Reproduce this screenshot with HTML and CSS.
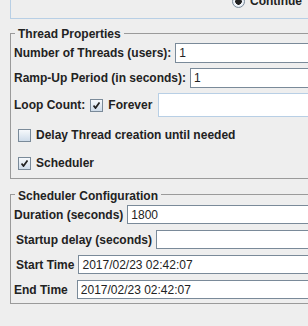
FILE: index.html
```html
<!DOCTYPE html>
<html lang="en">
<head>
    <meta charset="UTF-8">
    <title>Thread Group</title>
    <link rel="stylesheet" href="styles.css">
</head>
<body>

    <div class="policy">
        <label class="radio"><span class="radio-dot"></span>Continue</label>
    </div>

    <div class="group">
        <div class="group-title">Thread Properties</div>

        <div class="row first">
            <span class="label">Number of Threads (users):</span>
            <input class="field" type="text" value="1">
        </div>
        <div class="row">
            <span class="label">Ramp-Up Period (in seconds):</span>
            <input class="field" type="text" value="1">
        </div>
        <div class="row loop">
            <span class="label">Loop Count:</span>
            <span class="check on loop-check"></span>
            <span class="label">Forever</span>
            <input class="field disabled" type="text" value="">
        </div>
        <div class="row option delay">
            <span class="check"></span>
            <span class="label">Delay Thread creation until needed</span>
        </div>
        <div class="row option sched">
            <span class="check on"></span>
            <span class="label">Scheduler</span>
        </div>
    </div>

    <div class="group scheduler">
        <div class="group-title">Scheduler Configuration</div>

        <div class="row first">
            <span class="label">Duration (seconds)</span>
            <input class="field" type="text" value="1800">
        </div>
        <div class="row">
            <span class="label indent">Startup delay (seconds)</span>
            <input class="field" type="text" value="">
        </div>
        <div class="row">
            <span class="label indent">Start Time</span>
            <input class="field" type="text" value="2017/02/23 02:42:07">
        </div>
        <div class="row">
            <span class="label end">End Time</span>
            <input class="field" type="text" value="2017/02/23 02:42:07">
        </div>
    </div>

</body>
</html>
```

FILE: styles.css
```css
body {
    font-family: "Liberation Sans", Arial, sans-serif;
    font-size: 12px;
    background-color: #eeeeee;
    color: #222;
    margin: 0;
    width: 308px;
    height: 326px;
    overflow: hidden;
}
.policy {
    margin-left: 10px;
    width: 400px;
    height: 18px;
    border-left: 1px solid #b8cfe5;
    border-bottom: 1px solid #b8cfe5;
    display: flex;
    align-items: flex-end;
    padding-left: 221px;
}
.radio {
    display: flex;
    align-items: center;
    gap: 5px;
    font-weight: bold;
    line-height: 14px;
    margin-bottom: 10px;
}
.radio-dot {
    width: 11px;
    height: 11px;
    border: 1px solid #7a8a99;
    border-radius: 50%;
    background: radial-gradient(circle, #222 0 3px, #f4f7fb 3.5px, #cfdcea);
}
.group {
    margin: 14px 0 0 10px;
    width: 400px;
    border: 1px solid #9a9a9a;
    border-right: none;
    padding: 0 0 4px 3px;
}
.group.scheduler {
    margin-top: 15px;
}
.group-title {
    margin: -7px 0 0 1px;
    padding: 0 3px;
    width: fit-content;
    background-color: #eeeeee;
    font-weight: bold;
    line-height: 14px;
    color: #222;
}
.scheduler .group-title {
    margin-top: -6px;
}
.row {
    display: flex;
    align-items: center;
    gap: 4px;
    height: 20px;
    margin-top: 5px;
}
.row.first {
    margin-top: 2px;
}
.scheduler .row {
    height: 19px;
    margin-top: 6px;
}
.scheduler .row.first {
    margin-top: 2px;
}
.label {
    font-weight: bold;
    white-space: nowrap;
}
.label.indent {
    padding-left: 2px;
}
.label.end {
    padding-right: 5px;
}
.field {
    flex: 1;
    height: 100%;
    box-sizing: border-box;
    margin: 0;
    border: 1px solid #7a8a99;
    background-color: #fff;
    padding: 0 0 0 3px;
    font-family: "Liberation Sans", Arial, sans-serif;
    font-size: 12px;
    color: #222;
    outline: none;
}
.field.disabled {
    border-color: #b8cfe5;
    margin-left: 2px;
}
.row.loop {
    height: 24px;
}
.loop-check {
    margin-left: 1px;
    margin-right: 1px;
}
.row.option {
    height: 22px;
    padding-left: 4px;
    gap: 5px;
}
.row.delay {
    margin-top: 7px;
}
.row.sched {
    margin-top: 6px;
}
.check {
    width: 11px;
    height: 11px;
    flex: none;
    border: 1px solid #7a8a99;
    background: linear-gradient(#f6f9fc, #cfdcea);
    position: relative;
}
.check.on::after {
    content: "";
    position: absolute;
    left: 2px;
    top: 2px;
    width: 7px;
    height: 7px;
    background: no-repeat center / 7px 7px url("data:image/svg+xml;utf8,<svg xmlns='http://www.w3.org/2000/svg' width='7' height='7'><path d='M0.5 3.5 L2.5 6 L6.5 0.5' fill='none' stroke='%23222' stroke-width='1.8'/></svg>");
}
```
